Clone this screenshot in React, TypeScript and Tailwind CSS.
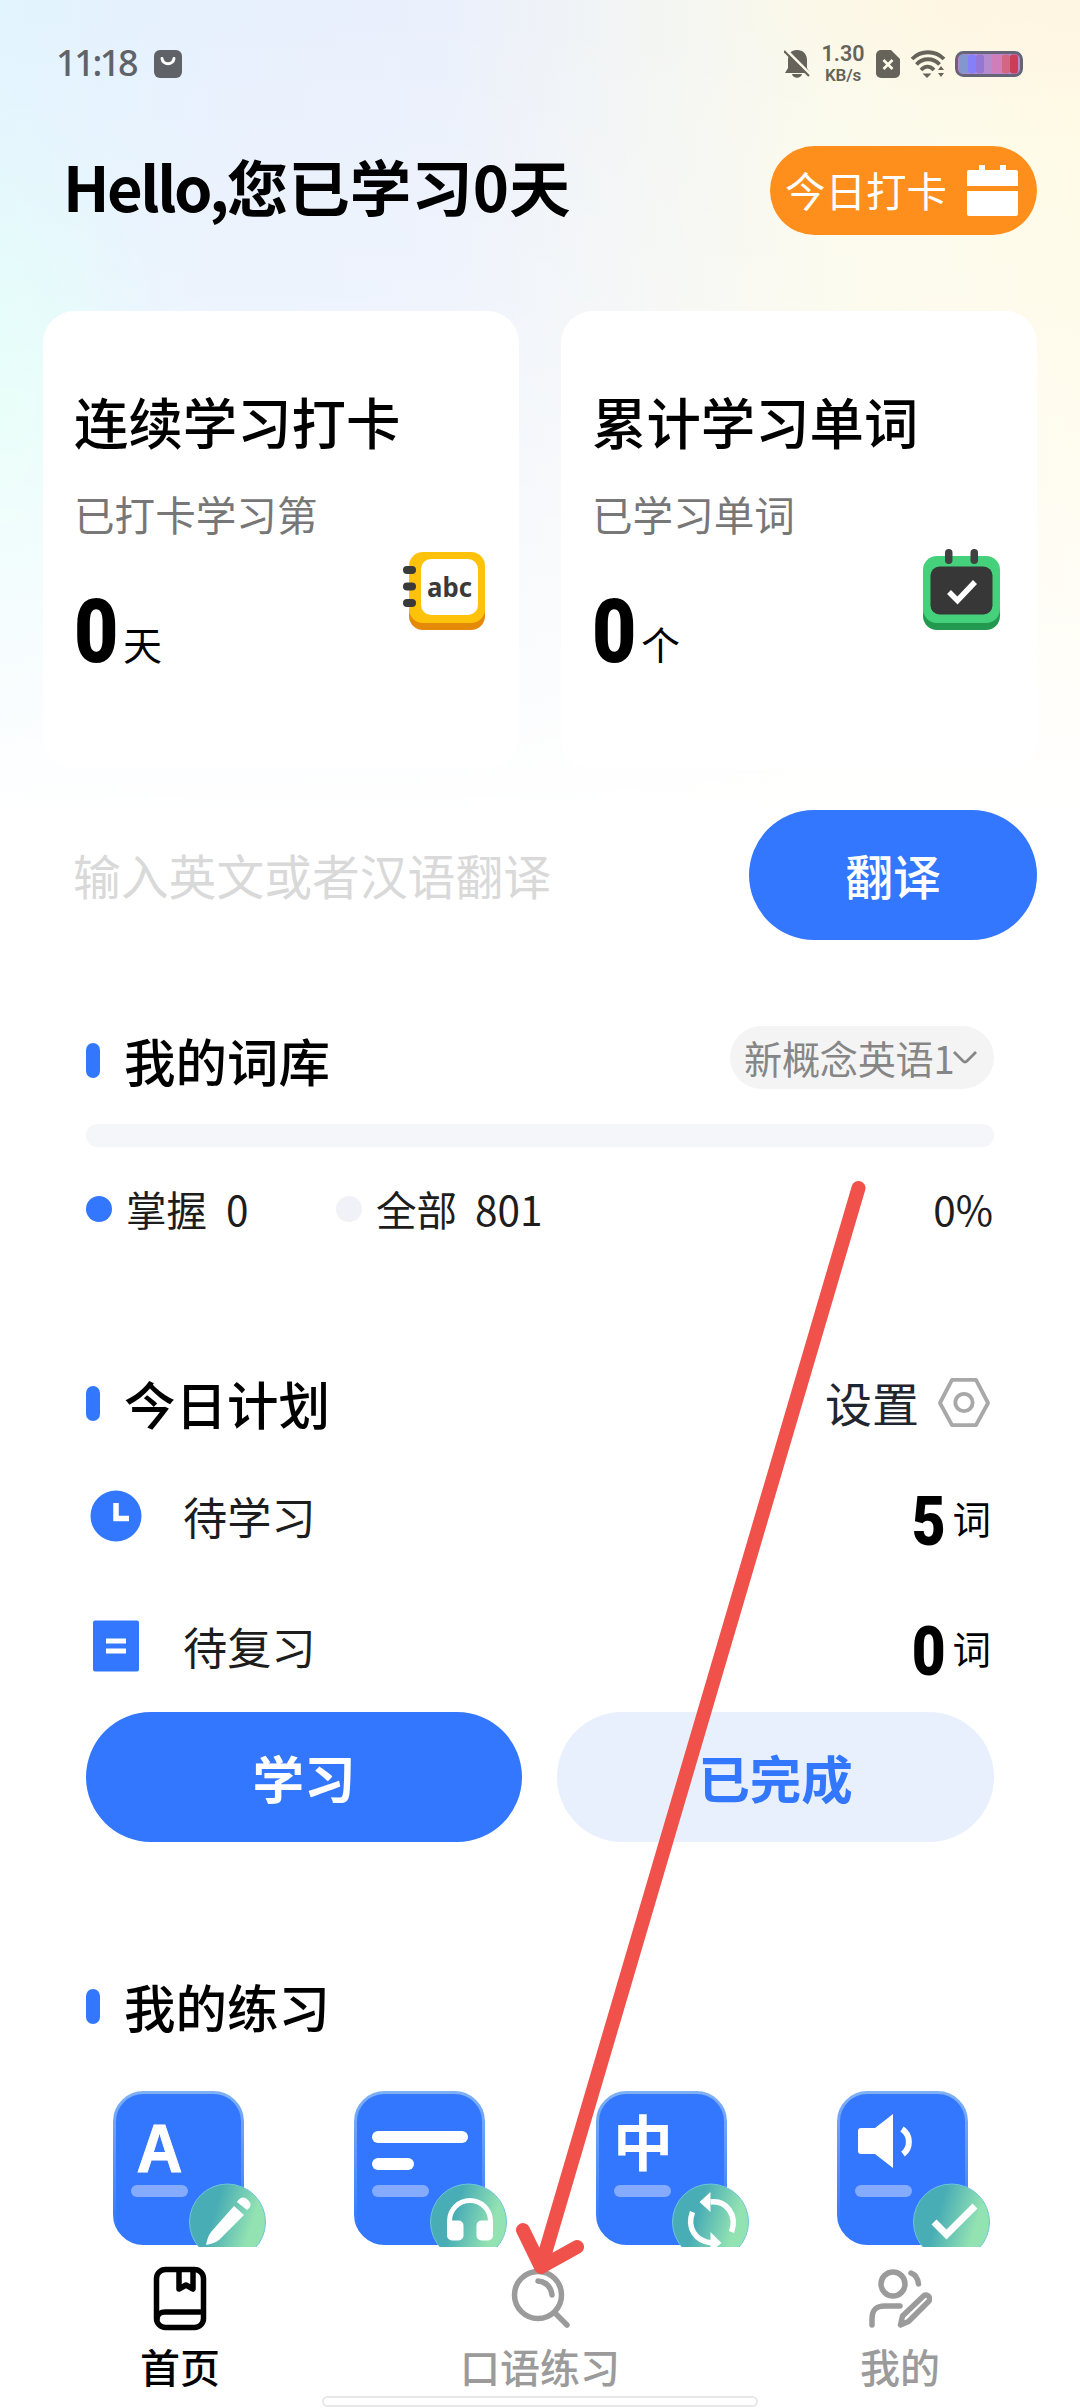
import React, { useState } from 'react';

const Bell: React.FC = () => (
  <svg className="w-[26px] h-[30px]" viewBox="0 0 26 30" fill="#66635a">
    <path d="M13 1c6 0 10 4 10 10v8l3 5H1l3-5v-8C4 5 7 1 13 1z" />
    <path d="M8 25h10c-1 5-9 5-10 0z" />
    <path d="M1 0l26 26" stroke="#fdfbe9" strokeWidth="3" />
    <path d="M0 2l25 25" stroke="#66635a" strokeWidth="2.200" />
  </svg>
);

const StatusBar: React.FC = () => (
  <div className="h-[128px] pl-[56px] pr-[57px] flex items-center justify-between text-[#5f6368]">
    <div className="flex items-center gap-4">
      <span className="font-['Noto_Sans'] text-[36px] font-medium leading-none w-[82px] tracking-[-2.400px] pb-[3px]">11:18</span>
      <svg className="w-7 h-7" viewBox="0 0 28 28">
        <rect width="28" height="28" rx="6" fill="#5f6368" />
        <path d="M8 8.500c1 7 11 7 12 0" fill="none" stroke="#fff" strokeWidth="3" strokeLinecap="round" />
      </svg>
    </div>
    <div className="flex items-center text-[#66635a]">
      <Bell />
      <div className="ml-[12px] w-[42px] flex flex-col items-center font-[Roboto] font-semibold">
        <span className="text-[21.500px] leading-[22px]">1.30</span>
        <span className="text-[17px] leading-[20px] tracking-[-0.200px]">KB/s</span>
      </div>
      <svg className="ml-[12px] w-[24px] h-[28px]" viewBox="0 0 24 28">
        <path d="M5 0h10l9 9v14a5 5 0 0 1-5 5H5a5 5 0 0 1-5-5V5a5 5 0 0 1 5-5z" fill="#66635a" />
        <path d="M7.500 10l9 9M16.500 10l-9 9" stroke="#fdfbe9" strokeWidth="2.600" />
      </svg>
      <svg className="ml-[10px] w-[36px] h-[28px]" viewBox="0 0 36 28" fill="none" stroke="#66635a" strokeWidth="3.800">
        <path d="M2 9c9-9 23-9 32 0" />
        <path d="M6.500 14.500c6-7 17-7 23 0" />
        <path d="M11 20c4-4.500 9-4.500 13 0" />
        <path d="M12.500 23.500h9L17 28z" fill="#66635a" stroke="none" />
        <path d="M28 20l3-4 3 4zM28 23l3 4 3-4z" fill="#66635a" stroke="none" />
      </svg>
      <svg className="ml-[9px] w-[68px] h-[26px]" viewBox="0 0 68 26">
        <rect x="1.500" y="1.500" width="65" height="23" rx="7" fill="#b48ccd" stroke="#666478" strokeWidth="3" />
        <rect x="4" y="3.500" width="11" height="19" rx="4" fill="#8397cc" />
        <rect x="13" y="3.500" width="8" height="19" rx="3" fill="#8580fa" />
        <rect x="21" y="3.500" width="8" height="19" rx="3" fill="#9476d6" />
        <rect x="37" y="3.500" width="11" height="19" fill="#cf7dbb" />
        <rect x="47" y="3.500" width="8" height="19" rx="3" fill="#d36780" />
        <rect x="55" y="3.500" width="8" height="19" rx="3" fill="#cd3c58" />
      </svg>
    </div>
  </div>
);

const NotebookIcon: React.FC = () => (
  <svg className="w-[84px] h-[84px]" viewBox="0 0 84 84">
    <rect x="7" y="12" width="76" height="69" rx="14" fill="#e48a08" />
    <rect x="7" y="3" width="76" height="71" rx="14" fill="#ffc20a" />
    <rect x="19" y="10" width="57" height="56" rx="10" fill="#fff" />
    <g fill="#3a3a3a">
      <rect x="1" y="17" width="13" height="8" rx="4" />
      <rect x="1" y="33.500" width="13" height="8" rx="4" />
      <rect x="1" y="50" width="13" height="8" rx="4" />
    </g>
    <text x="47.500" y="48" textAnchor="middle" fontSize="27" fontWeight="700" fontFamily="Noto Sans, sans-serif" fill="#3a3a3a" textLength="45" lengthAdjust="spacingAndGlyphs">abc</text>
  </svg>
);

const CalendarCheckIcon: React.FC = () => (
  <svg className="w-[84px] h-[84px]" viewBox="0 0 84 84">
    <rect x="3" y="17" width="77" height="64" rx="14" fill="#23994f" />
    <rect x="3" y="7" width="77" height="67" rx="14" fill="#45d07c" />
    <rect x="10.500" y="17.500" width="62" height="48" rx="9" fill="#373737" />
    <rect x="25" y="0" width="7.500" height="15" rx="3.700" fill="#3f4240" />
    <rect x="50.500" y="0" width="7.500" height="15" rx="3.700" fill="#3f4240" />
    <path d="M29 43l8.500 8.500L55 33" fill="none" stroke="#fff" strokeWidth="5.500" />
  </svg>
);

interface StatCardProps {
  title: string;
  subtitle: string;
  value: number;
  unit: string;
  icon: React.ReactNode;
}

const StatCard: React.FC<StatCardProps> = ({ title, subtitle, value, unit, icon }) => (
  <div className="w-[476px] h-[458px] rounded-[32px] bg-white pl-[31px] pr-[33px] pt-[77px]">
    <h2 className="text-[54.400px] leading-[66px] font-medium">{title}</h2>
    <p className="mt-[27px] text-[40.600px] leading-[66px] text-[#777]">{subtitle}</p>
    <div className="flex items-start justify-between">
      <div className="flex items-baseline mt-[33px]">
        <span className="w-[49px] font-[Roboto] text-[89px] leading-[100px] font-black">
          <span className="inline-block origin-left scale-x-[0.860] translate-y-[2px]">{value}</span>
        </span>
        <span className="text-[39px] leading-[50px]">{unit}</span>
      </div>
      <div className="mt-[2px]">{icon}</div>
    </div>
  </div>
);

const SectionTitle: React.FC<{ children: React.ReactNode }> = ({ children }) => (
  <div className="flex items-center gap-[24px]">
    <span className="w-[14px] h-[35px] rounded-full bg-[#3377ff]" />
    <h3 className="text-[51.500px] leading-[64px] font-medium">{children}</h3>
  </div>
);

interface PlanRowProps {
  icon: React.ReactNode;
  label: string;
  count: number;
}

const PlanRow: React.FC<PlanRowProps> = ({ icon, label, count }) => (
  <div className="h-[130px] flex items-center">
    <div className="w-[97px] pl-[4px] pb-[3px]">{icon}</div>
    <span className="flex-1 text-[44.200px] leading-[60px] text-[#1d1d1d] pb-[2px]">{label}</span>
    <span className="font-[Roboto] text-[68px] leading-[72px] font-black pt-[9px]">
      <span className="inline-block scale-x-[0.860]">{count}</span>
    </span>
    <span className="ml-[4px] mr-[3px] text-[38.500px] leading-[50px]">词</span>
  </div>
);

const badgeGlyphs = {
  pencil: (
    <g fill="#fff">
      <path d="M134 117l10 9-25 25c-4 3-8 4-13 5 1-5 2-9 5-13z" />
      <path d="M137 113c3-5 7-6 11-2s3 7-1 10z" />
    </g>
  ),
  headphones: (
    <g>
      <path d="M105 132v-2a20.500 20.500 0 0 1 41 0v2" fill="none" stroke="#fff" strokeWidth="5" />
      <path d="M102.500 129.500h11.500a5 5 0 0 1 5 5v10a5 5 0 0 1-5 5h-6.500a5 5 0 0 1-5-5zM148.500 129.500H137a5 5 0 0 0-5 5v10a5 5 0 0 0 5 5h6.500a5 5 0 0 0 5-5z" fill="#fff" />
    </g>
  ),
  sync: (
    <g fill="none" stroke="#fff" strokeWidth="5.500">
      <path d="M117 111c16-2 27 13 21 30" />
      <path d="M99 121c-6 16 3 29 19 31" />
      <path d="M106 111l11-10v20zM128 152l-11-11v20z" fill="#fff" stroke="none" />
    </g>
  ),
  check: <path d="M98 131l12.500 12.500L139 115" fill="none" stroke="#fff" strokeWidth="7" />,
};

const badgeOffsets = {
  pencil: 'translate(-13 -2)',
  headphones: 'translate(-9.500 0)',
  sync: 'translate(-2.500 0)',
  check: 'translate(-1 0)',
};

const faceGlyphs = {
  letter: (
    <text x="46.500" y="81" textAnchor="middle" fontSize="68" fontWeight="700" fontFamily="Liberation Sans, sans-serif" fill="#fff" stroke="#fff" strokeWidth="1" textLength="46" lengthAdjust="spacingAndGlyphs">A</text>
  ),
  lines: (
    <g fill="#fff">
      <rect x="18" y="40" width="96" height="12" rx="6" />
      <rect x="18" y="67" width="42" height="12" rx="6" />
    </g>
  ),
  zhong: (
    <text x="47" y="75" textAnchor="middle" fontSize="60" fontWeight="700" fontFamily="Noto Sans CJK SC, sans-serif" fill="#fff">中</text>
  ),
  speaker: (
    <g fill="#fff">
      <path d="M24 37h14l18-14v54L38 63H24a3 3 0 0 1-3-3V40a3 3 0 0 1 3-3z" />
      <path d="M65 38c9 6 9 19 1 25" fill="none" stroke="#fff" strokeWidth="6" />
    </g>
  ),
};

interface Practice {
  face: keyof typeof faceGlyphs;
  badge: keyof typeof badgeGlyphs;
}

const PRACTICES: Practice[] = [
  { face: 'letter', badge: 'pencil' },
  { face: 'lines', badge: 'headphones' },
  { face: 'zhong', badge: 'sync' },
  { face: 'speaker', badge: 'check' },
];

const PracticeIcon: React.FC<Practice> = ({ face, badge }) => (
  <svg className="w-[156px] h-[156px]" viewBox="0 0 156 156">
    <defs>
      <linearGradient id="badge" x1="0" y1="0.200" x2="1" y2="0.500">
        <stop offset="0.350" stopColor="#48adb5" />
        <stop offset="0.850" stopColor="#93e2b2" />
      </linearGradient>
      <linearGradient id="edge" x1="0" y1="0" x2="0" y2="1">
        <stop offset="0" stopColor="#7fb0f5" />
        <stop offset="0.900" stopColor="#3377ff" />
      </linearGradient>
    </defs>
    <rect x="1.500" y="1.500" width="128" height="151" rx="29" fill="#3377ff" stroke="url(#edge)" strokeWidth="3" />
    {faceGlyphs[face]}
    <rect x="18" y="94" width="57" height="12" rx="6" fill="#85abff" />
    <circle cx="114.500" cy="131" r="38" fill="url(#badge)" stroke="#6fc5d8" strokeWidth="1" />
    <g transform={badgeOffsets[badge]}>{badgeGlyphs[badge]}</g>
  </svg>
);

const TABS = [
  {
    key: 'home',
    label: '首页',
    icon: (
      <g>
        <rect x="8.500" y="5.500" width="47" height="58" rx="9" />
        <path d="M9 55c0-5 4-7 8-7h38M31 6v19l7-4 7 4V6" />
      </g>
    ),
  },
  {
    key: 'speak',
    label: '口语练习',
    icon: (
      <g>
        <circle cx="30" cy="31" r="23.500" />
        <path d="M47 49l12 12M30 17c8 1 13 6 14 14" />
      </g>
    ),
  },
  {
    key: 'mine',
    label: '我的',
    icon: (
      <g>
        <circle cx="25" cy="20" r="12" />
        <path d="M4 61v-6c0-9 4-13 13-13h15M43 9c5 2 7 6 7.500 11" />
        <path d="M32.500 61l2-9 21-20c4-3 8 2 5 5.500l-20 20z" />
      </g>
    ),
  },
];

const App: React.FC = () => {
  const [tab, setTab] = useState('home');
  const [word, setWord] = useState('');

  return (
    <div className="relative w-[1080px] h-[2408px] overflow-hidden flex flex-col bg-white text-black font-['Noto_Sans_CJK_SC',sans-serif]">
      <div className="h-[2247px] overflow-hidden bg-[linear-gradient(to_bottom,transparent_0px,rgba(255,255,255,0.25)_300px,rgba(255,255,255,0.6)_560px,#ffffff_820px),radial-gradient(ellipse_170px_330px_at_0px_420px,#dcfff6,transparent),radial-gradient(ellipse_360px_120px_at_1080px_0px,#fff4e1,transparent),linear-gradient(to_right,#e2f4fe_0px,#e7f0fd_220px,#eaf0fc_440px,#f3f5f4_640px,#fbfaea_840px,#fffae4_1080px)]">
        <StatusBar />

        <header className="h-[183px] pl-[63px] pr-[43px] flex items-start justify-between">
          <h1 className="mt-[16px] text-[61.500px] leading-[84px] font-bold whitespace-nowrap">
            <span className="tracking-[-2.500px]">Hello,</span>您已学习0天
          </h1>
          <button className="mt-[18px] w-[267px] h-[89px] rounded-full bg-[#ff8f1c] text-white flex items-center pl-[15px]">
            <span className="text-[40.500px] leading-[56px] pb-[2px]">今日打卡</span>
            <svg className="ml-[20px] w-[51px] h-[52px]" viewBox="0 0 51 52" fill="#fff">
              <path d="M2 5h10V0h6v5h15V0h6v5h10a2 2 0 0 1 2 2v14H0V7a2 2 0 0 1 2-2z" />
              <path d="M0 26h51v23a2 2 0 0 1-2 2H2a2 2 0 0 1-2-2z" />
            </svg>
          </button>
        </header>

        <div className="px-[43px] flex justify-between">
          <StatCard title="连续学习打卡" subtitle="已打卡学习第" value={0} unit="天" icon={<NotebookIcon />} />
          <StatCard title="累计学习单词" subtitle="已学习单词" value={0} unit="个" icon={<CalendarCheckIcon />} />
        </div>

        <div className="mt-[41px] pl-[73px] pr-[43px] flex items-center justify-between">
          <input
            className="w-[600px] text-[47.800px] leading-[70px] h-[70px] outline-none bg-transparent placeholder:text-[#d9d9d9]"
            placeholder="输入英文或者汉语翻译"
            value={word}
            onChange={(e) => setWord(e.target.value)}
          />
          <button className="w-[288px] h-[130px] rounded-full bg-[#3377ff] text-white text-[47.800px] font-medium">翻译</button>
        </div>

        {/* 我的词库 */}
        <section className="mt-[86px] px-[86px]">
          <div className="flex items-center justify-between h-[63px]">
            <div className="pt-[5px]"><SectionTitle>我的词库</SectionTitle></div>
            <button className="w-[264px] h-[63px] rounded-full bg-[#f4f4f4] text-[#868686] flex items-center pl-[14px]">
              <span className="text-[38.200px] leading-[50px] whitespace-nowrap tracking-[-0.300px]">新概念英语1</span>
              <svg className="-ml-[1px] w-[24px] h-[16px]" viewBox="0 0 24 16" fill="none" stroke="#868686" strokeWidth="2.800">
                <path d="M1 2l9 9q2 2 4 0l9-9" />
              </svg>
            </button>
          </div>
          <div className="mt-[35px] h-[23px] rounded-full bg-[#f5f6f9]" />
          <div className="mt-[32px] h-[60px] flex items-center text-[40.500px] leading-[60px] text-[#1d1d1d]">
            <span className="w-[26px] h-[26px] rounded-full bg-[#3377ff]" />
            <span className="ml-[14px] w-[210px]">掌握<span className="ml-[19px]">0</span></span>
            <span className="w-[26px] h-[26px] rounded-full bg-[#f1f2f7]" />
            <span className="ml-[14px] flex-1">全部<span className="ml-[18px]">801</span></span>
            <span className="mr-px">0%</span>
          </div>
        </section>

        {/* 今日计划 */}
        <section className="mt-[132px] px-[86px]">
          <div className="flex items-center justify-between h-[64px]">
            <SectionTitle>今日计划</SectionTitle>
            <button className="mr-[3px] flex items-center text-[#1f2630]">
              <span className="text-[47px] leading-[60px] pb-[2px]">设置</span>
              <svg className="ml-[18px] w-[54px] h-[50px]" viewBox="0 0 56 52" fill="none" stroke="#a8a8a8" strokeWidth="4">
                <path d="M15.500 2h25L53 26 40.500 49h-25L3 26z" strokeLinejoin="round" />
                <circle cx="28" cy="25.500" r="9" />
              </svg>
            </button>
          </div>
          <div className="mt-[17px]">
            <PlanRow
              label="待学习"
              count={5}
              icon={
                <svg className="w-[52px] h-[52px]" viewBox="0 0 52 52">
                  <circle cx="26" cy="26" r="25.500" fill="#3377ff" />
                  <path d="M26 13v15.500h13" fill="none" stroke="#fff" strokeWidth="5.500" />
                </svg>
              }
            />
            <PlanRow
              label="待复习"
              count={0}
              icon={
                <svg className="w-[52px] h-[52px]" viewBox="0 0 52 52">
                  <rect x="3" y="0.500" width="46" height="51" rx="2" fill="#3377ff" />
                  <path d="M16 21h20M16 31h20" stroke="#fff" strokeWidth="5" />
                </svg>
              }
            />
          </div>
          <div className="flex justify-between text-[51.500px] font-bold">
            <button className="w-[436px] h-[130px] rounded-full bg-[#3377ff] text-white">学习</button>
            <button className="w-[437px] h-[130px] rounded-full bg-[#e8f0fe] text-[#3377ff]">已完成</button>
          </div>
        </section>

        {/* 我的练习 */}
        <section className="mt-[132px] px-[86px]">
          <SectionTitle>我的练习</SectionTitle>
          <div className="mt-[53px] pl-[27px] flex gap-[85.400px]">
            {PRACTICES.map((p) => (
              <PracticeIcon key={p.face} {...p} />
            ))}
          </div>
        </section>
      </div>

      <nav className="flex-1 bg-white grid grid-cols-3">
        {TABS.map((t) => (
          <button
            key={t.key}
            onClick={() => setTab(t.key)}
            className={`flex flex-col items-center pt-[17px] ${tab === t.key ? 'text-black' : 'text-[#9b9b9b]'}`}
          >
            <svg className="w-[64px] h-[68px] shrink-0" viewBox="0 0 64 68" fill="none" stroke="currentColor" strokeWidth="5.500" strokeLinecap="round" strokeLinejoin="round">
              {t.icon}
            </svg>
            <span className="mt-[6px] text-[40px] leading-[56px] font-medium">{t.label}</span>
          </button>
        ))}
      </nav>

      <div className="absolute left-[322px] top-[2396px] w-[436px] h-[11px] rounded-full bg-white border-2 border-[#e8e8e8]" />

      {/* 指向口语练习的提示箭头 */}
      <svg className="absolute inset-0 w-[1080px] h-[2408px] pointer-events-none" viewBox="0 0 1080 2408" fill="none" stroke="#f0524b" strokeWidth="14" strokeLinecap="round" strokeLinejoin="round">
        <path d="M858.500 1188L541 2267M523 2230l18 37 36-20" />
      </svg>
    </div>
  );
};

export default App;
